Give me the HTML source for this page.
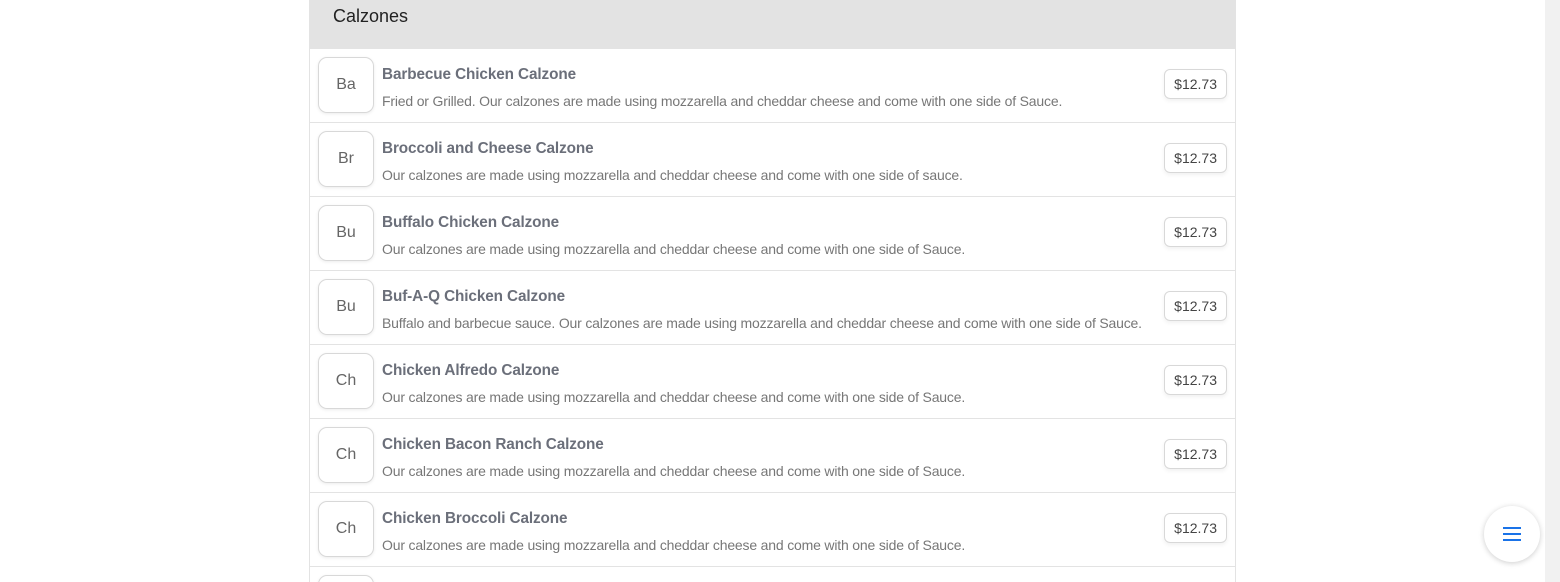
<!DOCTYPE html>
<html><head><style>
html,body{margin:0;width:1560px;height:582px;overflow:hidden}
body{background:#fff;font-family:"Liberation Sans",sans-serif;position:relative}
.wrap{position:absolute;left:309px;top:0;width:925px;height:582px;overflow:hidden;border-left:1px solid #e3e3e3;border-right:1px solid #e3e3e3}
.hd{height:49px;background:#e3e3e3;font-size:18px;color:#222;padding-left:23px;line-height:32px;box-sizing:border-box}
.row{height:74px;border-bottom:1px solid #e3e3e3;position:relative;box-sizing:border-box}
.av{position:absolute;left:8px;top:8px;width:54px;height:54px;border:1px solid #d8d8d8;border-radius:9px;text-align:center;line-height:54px;font-size:16px;color:#666;box-shadow:0 1px 3px rgba(0,0,0,.08)}
.t{position:absolute;left:72px;top:17px;font-size:15.3px;font-weight:bold;color:#6b6f7a;letter-spacing:-0.1px}
.d{position:absolute;left:72px;top:44px;font-size:14px;color:#777;letter-spacing:-0.18px;white-space:nowrap}
.p{position:absolute;right:8px;top:20px;height:28px;padding:0 9px;border:1px solid #d8d8d8;border-radius:6px;line-height:28px;font-size:14px;color:#444;box-shadow:0 2px 4px rgba(0,0,0,.06)}
.sb{position:absolute;right:0;top:0;width:15px;height:582px;background:#f1f1f1}
.fab{position:absolute;left:1484px;top:506px;width:56px;height:56px;border-radius:50%;background:#fff;box-shadow:0 1px 6px rgba(0,0,0,.2)}
.fab i{position:absolute;left:19px;width:18px;height:2px;background:#1a73e8}
</style></head><body>
<div class="wrap">
<div class="hd">Calzones</div>
<div class="row"><div class="av">Ba</div><div class="t">Barbecue Chicken Calzone</div><div class="d">Fried or Grilled. Our calzones are made using mozzarella and cheddar cheese and come with one side of Sauce.</div><div class="p">$12.73</div></div>
<div class="row"><div class="av">Br</div><div class="t">Broccoli and Cheese Calzone</div><div class="d">Our calzones are made using mozzarella and cheddar cheese and come with one side of sauce.</div><div class="p">$12.73</div></div>
<div class="row"><div class="av">Bu</div><div class="t">Buffalo Chicken Calzone</div><div class="d">Our calzones are made using mozzarella and cheddar cheese and come with one side of Sauce.</div><div class="p">$12.73</div></div>
<div class="row"><div class="av">Bu</div><div class="t">Buf-A-Q Chicken Calzone</div><div class="d">Buffalo and barbecue sauce. Our calzones are made using mozzarella and cheddar cheese and come with one side of Sauce.</div><div class="p">$12.73</div></div>
<div class="row"><div class="av">Ch</div><div class="t">Chicken Alfredo Calzone</div><div class="d">Our calzones are made using mozzarella and cheddar cheese and come with one side of Sauce.</div><div class="p">$12.73</div></div>
<div class="row"><div class="av">Ch</div><div class="t">Chicken Bacon Ranch Calzone</div><div class="d">Our calzones are made using mozzarella and cheddar cheese and come with one side of Sauce.</div><div class="p">$12.73</div></div>
<div class="row"><div class="av">Ch</div><div class="t">Chicken Broccoli Calzone</div><div class="d">Our calzones are made using mozzarella and cheddar cheese and come with one side of Sauce.</div><div class="p">$12.73</div></div>
<div class="row" style="height:15px;border:0"><div class="av"></div></div>
</div>
<div class="sb"></div>
<div class="fab"><i style="top:21px"></i><i style="top:27px"></i><i style="top:33px"></i></div>
</body></html>
